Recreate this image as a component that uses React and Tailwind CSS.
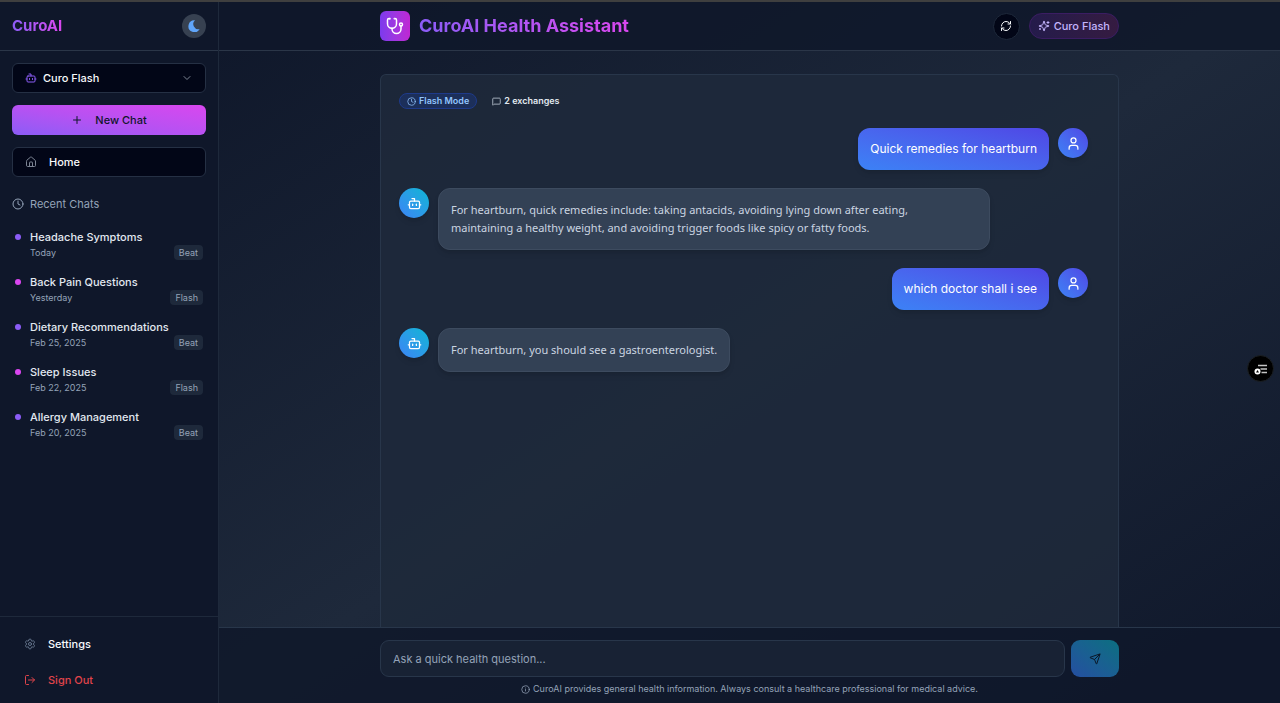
import {
  Bot,
  ChevronDown,
  Plus,
  House,
  Clock,
  Settings,
  LogOut,
  RefreshCw,
  MessageSquare,
  User,
  Send,
  Info,
} from "lucide-react";

const recentChats = [
  { title: "Headache Symptoms", date: "Today", model: "Beat" },
  { title: "Back Pain Questions", date: "Yesterday", model: "Flash" },
  { title: "Dietary Recommendations", date: "Feb 25, 2025", model: "Beat" },
  { title: "Sleep Issues", date: "Feb 22, 2025", model: "Flash" },
  { title: "Allergy Management", date: "Feb 20, 2025", model: "Beat" },
];

const messages = [
  { from: "user", text: "Quick remedies for heartburn" },
  {
    from: "bot",
    wide: true,
    text: "For heartburn, quick remedies include: taking antacids, avoiding lying down after eating,\nmaintaining a healthy weight, and avoiding trigger foods like spicy or fatty foods.",
  },
  { from: "user", text: "which doctor shall i see" },
  { from: "bot", text: "For heartburn, you should see a gastroenterologist." },
];

function StethoscopeIcon() {
  return (
    <svg
      viewBox="0 0 24 24"
      className="size-[18px]"
      fill="none"
      stroke="currentColor"
      strokeWidth="2"
      strokeLinecap="round"
      strokeLinejoin="round"
      aria-hidden="true"
    >
      <path d="M4.8 2.3A.3.3 0 1 0 5 2H4a2 2 0 0 0-2 2v5a6 6 0 0 0 6 6 6 6 0 0 0 6-6V4a2 2 0 0 0-2-2h-1a.2.2 0 1 0 .3.3" />
      <path d="M8 15v1a6 6 0 0 0 6 6 6 6 0 0 0 6-6v-4" />
      <circle cx="20" cy="10" r="2" />
    </svg>
  );
}

function SparklesIcon() {
  return (
    <svg
      viewBox="0 0 24 24"
      className="size-3"
      fill="none"
      stroke="currentColor"
      strokeWidth="2"
      strokeLinecap="round"
      strokeLinejoin="round"
      aria-hidden="true"
    >
      <path d="M9.937 15.5A2 2 0 0 0 8.5 14.063l-6.135-1.582a.5.5 0 0 1 0-.962L8.5 9.936A2 2 0 0 0 9.937 8.5l1.582-6.135a.5.5 0 0 1 .963 0L14.063 8.5A2 2 0 0 0 15.5 9.937l6.135 1.581a.5.5 0 0 1 0 .964L15.5 14.063a2 2 0 0 0-1.437 1.437l-1.582 6.135a.5.5 0 0 1-.963 0z" />
      <path d="M20 3v4M22 5h-4M4 17v2M5 18H3" />
    </svg>
  );
}

function Sidebar() {
  return (
    <aside className="flex w-[219px] shrink-0 flex-col border-r border-[#1e293b] bg-[#0f172a]">
      <div className="flex h-[49px] items-center justify-between border-b border-[#2b3648] px-3">
        <span className="bg-gradient-to-r from-[#8b5cf6] to-[#d946ef] bg-clip-text text-[15px] leading-5 font-bold text-transparent">
          CuroAI
        </span>
        <button
          type="button"
          aria-label="Toggle dark mode"
          className="flex size-6 items-center justify-center rounded-full bg-[#374151]"
        >
          <svg viewBox="0 0 12 12" className="size-3" fill="#60a5fa" aria-hidden="true">
            <path d="M7 0.2A6 6 0 1 0 11.7 9.1A5.2 5.2 0 0 1 7 0.2Z" />
          </svg>
        </button>
      </div>

      <div className="flex flex-col gap-3 px-3 pt-3">
        <button
          type="button"
          aria-haspopup="listbox"
          className="flex h-[30px] items-center rounded-md border border-[#253044] bg-[#020617] px-3 text-[11px] font-medium text-[#f8fafc]"
        >
          <Bot size={12} className="mr-1.5 text-[#8b5cf6]" />
          Curo Flash
          <ChevronDown size={12} className="ml-auto text-[#7d8594]" />
        </button>
        <button
          type="button"
          className="flex h-[30px] items-center justify-center gap-3 rounded-md bg-gradient-to-tr from-[#8b5cf6] via-[#b851f2] to-[#d946ef] text-[11px] font-medium text-[#0f172a]"
        >
          <Plus size={12} />
          New Chat
        </button>
        <a
          href="#home"
          className="flex h-[30px] items-center gap-3 rounded-md border border-[#253044] bg-[#020617] px-3 text-[11px] font-medium text-[#f8fafc]"
        >
          <House size={12} className="text-[#7d8594]" />
          Home
        </a>
      </div>

      <div className="min-h-0 flex-1 overflow-hidden px-3 pt-[18px]">
        <h2 className="flex items-center gap-1.5 text-[11px] leading-[18px] text-[#94a3b8]">
          <Clock size={12} />
          Recent Chats
        </h2>
        <ul className="pt-2">
          {recentChats.map((chat) => (
            <li key={chat.title}>
              <a href="#chat" className="flex h-[45px] gap-[9px] px-[3px] pt-2">
                <span
                  className={
                    chat.model === "Beat"
                      ? "mt-[5px] size-1.5 shrink-0 rounded-full bg-[#8b5cf6]"
                      : "mt-[5px] size-1.5 shrink-0 rounded-full bg-[#d946ef]"
                  }
                />
                <span className="flex min-w-0 flex-1 flex-col">
                  <span className="truncate text-[11px] leading-4 font-medium text-[#e2e8f0]">
                    {chat.title}
                  </span>
                  <span className="flex items-center justify-between text-[9px] leading-[15px] text-[#94a3b8]">
                    {chat.date}
                    <span className="rounded bg-[#1e293b] px-[5px]">{chat.model}</span>
                  </span>
                </span>
              </a>
            </li>
          ))}
        </ul>
      </div>

      <div className="flex h-[87px] flex-col gap-1.5 border-t border-[#1e293b] px-3 pt-3 text-[11px] font-medium">
        <button type="button" className="flex h-[30px] items-center gap-3 px-3 text-[#f8fafc]">
          <Settings size={12} className="text-[#64748b]" />
          Settings
        </button>
        <button type="button" className="flex h-[30px] items-center gap-3 px-3 text-[#e0444b]">
          <LogOut size={12} />
          Sign Out
        </button>
      </div>
    </aside>
  );
}

function TopBar() {
  return (
    <header className="h-[49px] shrink-0 border-b border-[#2b3648] bg-[#0f172a]/85">
      <div className="mx-auto flex h-full max-w-[739px] items-center">
        <span className="flex size-[30px] items-center justify-center rounded-md bg-gradient-to-r from-[#7c3aed] to-[#c026d3] text-white">
          <StethoscopeIcon />
        </span>
        <h1 className="ml-[9px] bg-gradient-to-r from-[#8b5cf6] to-[#d946ef] bg-clip-text text-[18px] leading-6 font-bold text-transparent">
          CuroAI Health Assistant
        </h1>
        <button
          type="button"
          aria-label="Refresh chat"
          className="ml-auto flex size-[27px] items-center justify-center rounded-full border border-[#1e293b] bg-[#020617] text-[#f8fafc]"
        >
          <RefreshCw size={12} />
        </button>
        <span className="ml-[9px] flex h-[26px] items-center gap-1 rounded-full border border-[#3b1d63] bg-gradient-to-r from-[#241b4b] to-[#351b41] px-2 text-[11px] font-medium text-[#c4b5fd]">
          <SparklesIcon />
          Curo Flash
        </span>
      </div>
    </header>
  );
}

function Message({ message }) {
  if (message.from === "user") {
    return (
      <li className="flex justify-end gap-[9px]">
        <p className="rounded-xl bg-gradient-to-tr from-[#3b82f6] to-[#4f46e5] px-3 py-3 text-[12px] leading-[18px] text-white shadow-md">
          {message.text}
        </p>
        <span className="flex size-[30px] shrink-0 items-center justify-center rounded-full bg-gradient-to-tr from-[#3b82f6] to-[#4f46e5] text-white shadow-md">
          <User size={15} />
        </span>
      </li>
    );
  }
  return (
    <li className="flex gap-[9px]">
      <span className="flex size-[30px] shrink-0 items-center justify-center rounded-full bg-gradient-to-tr from-[#3b82f6] to-[#06b6d4] text-white shadow-md">
        <Bot size={15} />
      </span>
      <div className={message.wide ? "w-full max-w-[552px]" : "max-w-[552px]"}>
        <p className="rounded-xl border border-[#3d4b5f] bg-[#334155] px-3 py-3 font-['Noto_Sans',sans-serif] text-[11px] leading-[18px] whitespace-pre-line text-[#cbd5e1] shadow-md">
          {message.text}
        </p>
      </div>
    </li>
  );
}

export default function App() {
  return (
    <div className="flex h-screen flex-col overflow-hidden bg-[#0f172a] font-[Inter,sans-serif]">
      <div className="h-0.5 shrink-0 bg-[#3f3f3f]" />
      <div className="flex min-h-0 flex-1">
        <Sidebar />
        <main className="flex min-w-0 flex-1 flex-col bg-gradient-to-br from-[#0f172a] via-[#1e293b] to-[#0f172a]">
          <TopBar />
          <div className="flex min-h-0 flex-1 justify-center pt-[23px]">
            <section
              aria-label="Conversation"
              className="w-full max-w-[739px] rounded-t-md border border-b-0 border-[#28364a] bg-[#1e293b]/90 px-[18px] pt-[18px]"
            >
              <div className="flex items-center gap-[15px] text-[9px] leading-[14px] font-semibold">
                <span className="flex items-center gap-[3px] rounded-full border border-[#1e3a8a] bg-[#1c2f5a] px-[7px] text-[#93c5fd]">
                  <Clock size={9} />
                  Flash Mode
                </span>
                <span className="flex items-center gap-[3px] text-[#e2e8f0]">
                  <MessageSquare size={9} className="text-[#cbd5e1]" />
                  2 exchanges
                </span>
              </div>
              <ul className="flex flex-col gap-[18px] pt-[19px] pr-3">
                {messages.map((message) => (
                  <Message key={message.text} message={message} />
                ))}
              </ul>
            </section>
          </div>
          <footer className="h-[76px] shrink-0 border-t border-[#28364a] bg-[#0f172a]/85 pt-3">
            <form
              className="mx-auto flex max-w-[739px] gap-1.5"
              onSubmit={(event) => event.preventDefault()}
            >
              <input
                type="text"
                aria-label="Health question"
                placeholder="Ask a quick health question..."
                className="h-[37px] min-w-0 flex-1 rounded-[9px] border border-[#28364a] bg-[#182234] px-3 text-[11px] text-[#e2e8f0] placeholder:text-[#94a3b8]"
              />
              <button
                type="submit"
                aria-label="Send"
                className="flex h-[37px] w-12 items-center justify-center rounded-[9px] bg-gradient-to-tr from-[#254ea1] to-[#0b6f80] text-[#0b1728]"
              >
                <Send size={12} />
              </button>
            </form>
            <p className="flex items-center justify-center gap-[3px] pt-[5px] text-[9px] leading-[14px] text-[#94a3b8]">
              <Info size={9} />
              CuroAI provides general health information. Always consult a healthcare professional
              for medical advice.
            </p>
          </footer>
        </main>
      </div>
      <button
        type="button"
        aria-label="Open side panel"
        className="fixed top-[355px] right-[6px] flex size-[27px] items-center justify-center rounded-full border border-[#1c2024] bg-black"
      >
        <svg viewBox="0 0 14 12" className="h-3 w-3.5" aria-hidden="true">
          <path d="M4 2.5H13M6.5 6H13M7.5 9.5H13" stroke="#c4c4c4" strokeWidth="1.3" />
          <circle cx="3.5" cy="8.5" r="3" fill="#fff" />
          <path d="M3.5 7L5 9.5H2Z" fill="#000" />
        </svg>
      </button>
    </div>
  );
}
